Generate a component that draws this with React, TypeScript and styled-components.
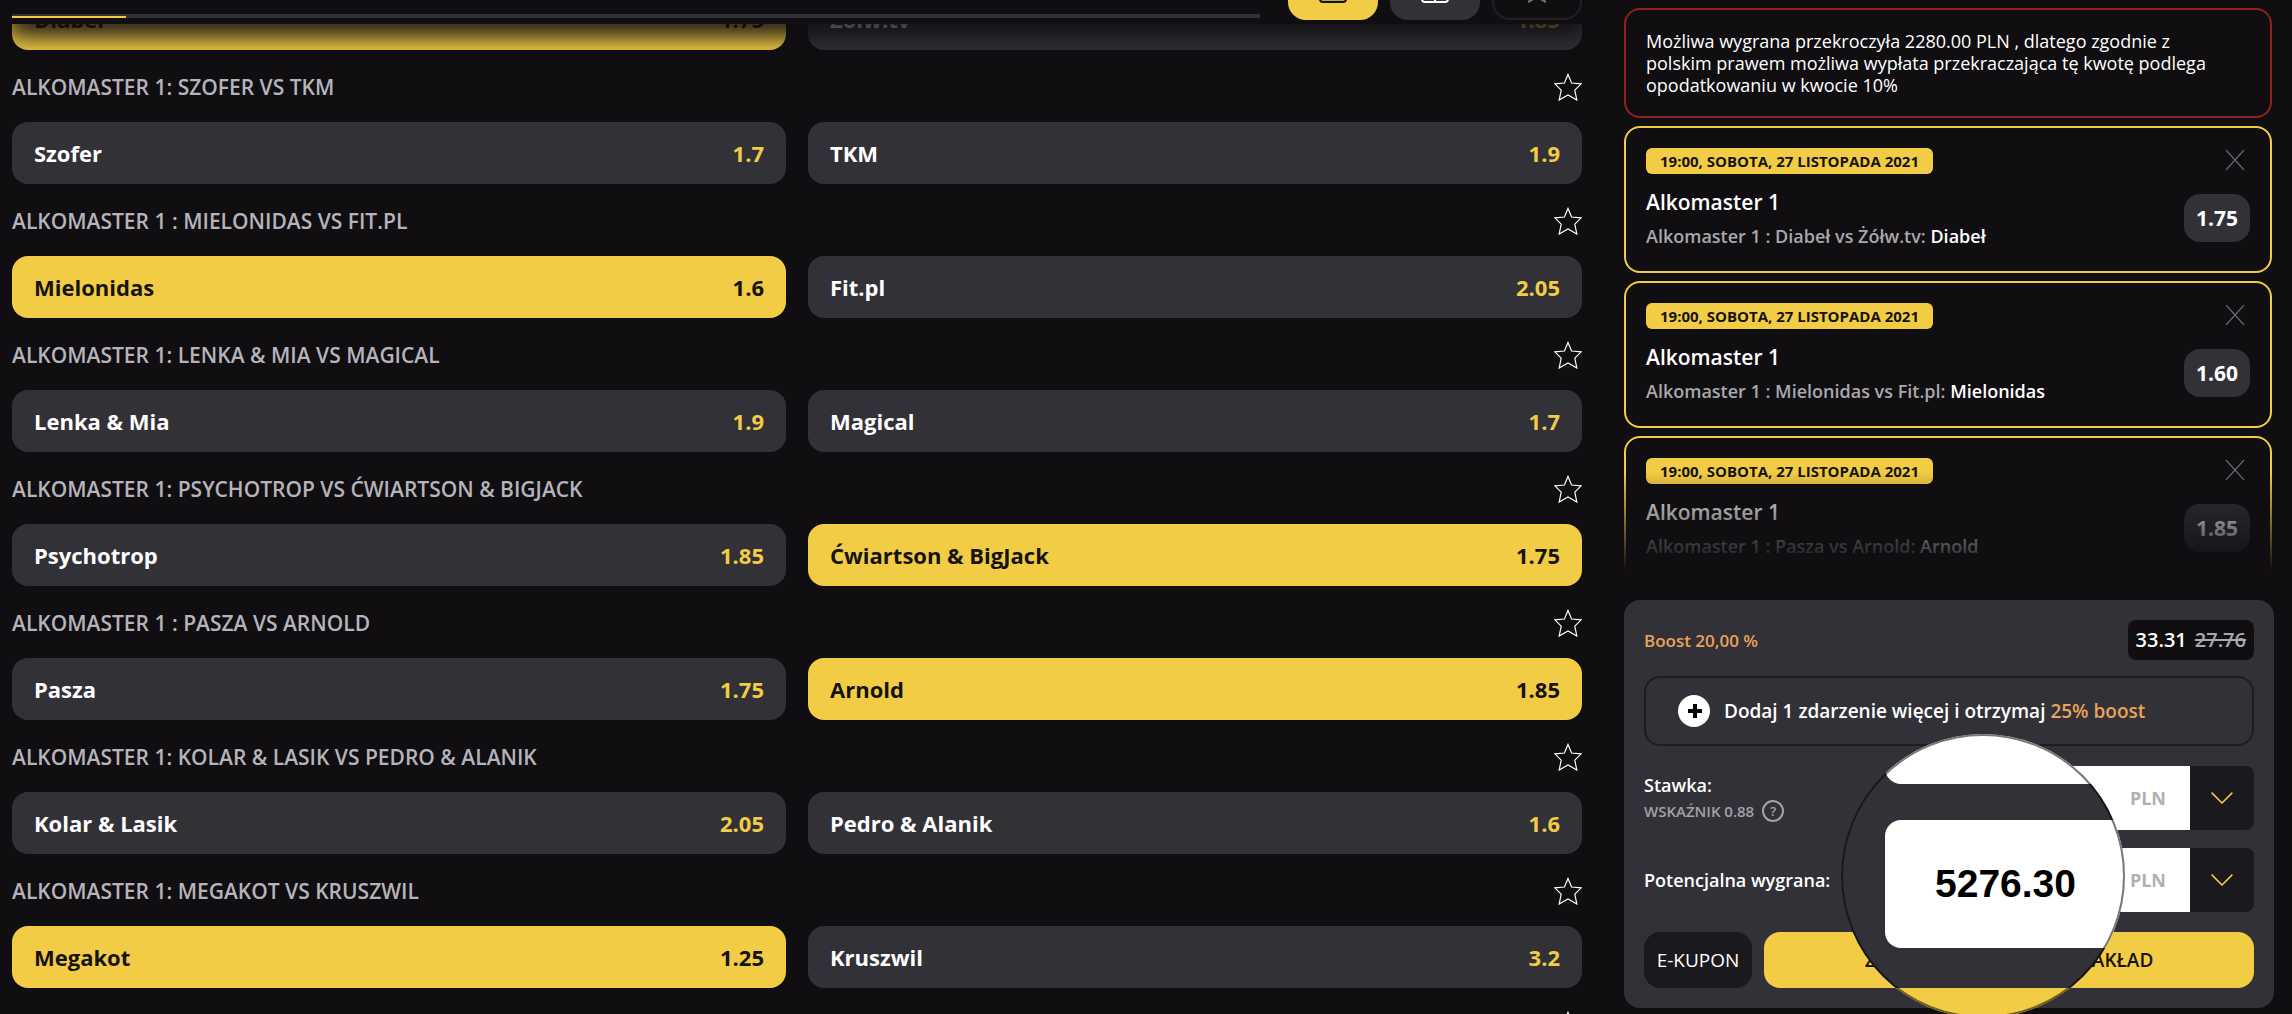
import React from "react";
import styled, { createGlobalStyle, css } from "styled-components";

const color = {
  page: "#100e11",
  card: "#323137",
  ink: "#1a191e",
  line: "#1e1d22",
  yellow: "#f2cc45",
  orange: "#e9a35b",
  red: "#8f231c",
  muted: "#b5b4bb",
  white: "#ffffff",
};

const GlobalStyle = createGlobalStyle`
  * { box-sizing: border-box; }
  body {
    margin: 0;
    background: ${color.page};
    color: ${color.white};
    font-family: "Open Sans", "Noto Sans", sans-serif;
  }
  button, input { font: inherit; color: inherit; }
  button { border: 0; padding: 0; background: none; cursor: pointer; }
  h2, h3, p { margin: 0; font-weight: inherit; font-size: inherit; }
`;

const Page = styled.div`
  display: flex;
  gap: 42px;
  height: 100vh;
  padding: 0 18px 0 12px;
  overflow: hidden;
`;

/* ---------- offer ---------- */

const Offer = styled.main`
  display: flex;
  flex: 1;
  flex-direction: column;
  min-width: 0;
`;

const TopBar = styled.header`
  position: relative;
  z-index: 1;
  display: flex;
  align-items: flex-end;
  gap: 28px;
  flex: none;
  height: 24px;
  background: ${color.page};
  box-shadow: 0 8px 24px 4px ${color.page};
`;

const Tabs = styled.nav`
  display: flex;
  flex: 1;
  margin-bottom: 6px;
  border-bottom: 4px solid ${color.card};
`;

const Tab = styled.button`
  width: 114px;
  height: 16px;
  margin-bottom: -4px;
  border-bottom: 2px solid ${color.yellow};
`;

const ViewSwitch = styled.div`
  display: flex;
  align-items: flex-end;
  gap: 12px;
  padding-bottom: 4px;
`;

const ViewButton = styled.button<{ $tone: "active" | "plain" | "outline" }>`
  display: flex;
  align-items: center;
  justify-content: center;
  width: 90px;
  height: 60px;
  border-radius: 18px;
  ${({ $tone }) =>
    $tone === "active"
      ? css`background: ${color.yellow};`
      : $tone === "plain"
      ? css`background: ${color.card};`
      : css`border: 2px solid #201f24;`}
`;

const EventList = styled.div`
  flex: 1;
  min-height: 0;
  overflow: hidden;
`;

const EventScroll = styled.div`
  margin-top: -108px;
`;

const EventHead = styled.div`
  display: flex;
  align-items: center;
  justify-content: space-between;
  height: 72px;
  padding-top: 2px;
`;

const EventTitle = styled.h3`
  color: ${color.muted};
  font-size: 21px;
  font-weight: 600;
  line-height: 32px;
  text-transform: uppercase;
`;

const IconButton = styled.button`
  display: flex;
`;

const Options = styled.div`
  display: grid;
  grid-template-columns: 1fr 1fr;
  gap: 22px;
`;

const Option = styled.button<{ $picked?: boolean }>`
  display: flex;
  align-items: center;
  justify-content: space-between;
  height: 62px;
  padding: 0 22px;
  border-radius: 16px;
  background: ${({ $picked }) => ($picked ? color.yellow : color.card)};
  color: ${({ $picked }) => ($picked ? "#16130c" : color.white)};
  font-size: 22px;
  font-weight: 700;
  line-height: 32px;
`;

const Odd = styled.span<{ $picked?: boolean }>`
  color: ${({ $picked }) => ($picked ? "inherit" : color.yellow)};
`;

/* ---------- bet slip ---------- */

const Slip = styled.aside`
  display: flex;
  flex-direction: column;
  gap: 28px;
  flex: none;
  width: 650px;
  padding: 8px 0 6px;
`;

const SlipList = styled.div`
  position: relative;
  display: flex;
  flex: 1;
  flex-direction: column;
  gap: 8px;
  min-height: 0;
  padding-right: 2px;
  overflow: hidden;

  &::after {
    position: absolute;
    inset: auto 0 0;
    height: 100px;
    background: linear-gradient(#100e1100, ${color.page});
    content: "";
    pointer-events: none;
  }
`;

const Notice = styled.p`
  flex: none;
  padding: 20px 40px 20px 20px;
  border: 2px solid ${color.red};
  border-radius: 16px;
  font-size: 18px;
  line-height: 22px;
`;

const Bet = styled.article`
  display: flex;
  flex: none;
  justify-content: space-between;
  height: 147px;
  padding: 20px;
  border: 2px solid ${color.yellow};
  border-radius: 16px;
`;

const BetInfo = styled.div`
  display: flex;
  flex-direction: column;
  align-items: flex-start;
`;

const BetDate = styled.time`
  padding: 0 14px;
  border-radius: 6px;
  background: ${color.yellow};
  color: #16130c;
  font-size: 15px;
  font-weight: 700;
  line-height: 26px;
  text-transform: uppercase;
`;

const BetTitle = styled.h3`
  margin-top: 12px;
  font-size: 21px;
  font-weight: 600;
  line-height: 32px;
`;

const BetPick = styled.p`
  margin-top: 4px;
  color: #a9a8ac;
  font-size: 18px;
  font-weight: 600;
  line-height: 28px;

  strong { color: ${color.white}; font-weight: 600; }
`;

const BetSide = styled.div`
  display: flex;
  flex-direction: column;
  align-items: flex-end;
  gap: 24px;
  padding-top: 2px;
`;

const CloseButton = styled(IconButton)`
  padding-right: 5px;
`;

const BetOdd = styled.span`
  width: 66px;
  border-radius: 16px;
  background: ${color.card};
  font-size: 21px;
  font-weight: 700;
  line-height: 48px;
  text-align: center;
`;

const Coupon = styled.section`
  position: relative;
  display: flex;
  flex: none;
  flex-direction: column;
  padding: 20px;
  border-radius: 16px;
  background: ${color.card};
`;

const Line = styled.div`
  display: flex;
  align-items: center;
  justify-content: space-between;
`;

const Boost = styled.span`
  color: ${color.orange};
  font-size: 17px;
  font-weight: 600;
`;

const TotalOdds = styled.span`
  display: flex;
  gap: 8px;
  padding: 0 8px;
  border-radius: 8px;
  background: ${color.page};
  font-size: 20px;
  font-weight: 600;
  line-height: 40px;

  s { color: #a9a8ac; }
`;

const Promo = styled.button`
  display: flex;
  align-items: center;
  gap: 14px;
  height: 70px;
  margin-top: 16px;
  padding: 0 32px;
  border: 2px solid ${color.line};
  border-radius: 16px;
  font-size: 19px;
  font-weight: 600;

  em { color: ${color.orange}; font-style: normal; }
`;

const FieldRow = styled(Line)<{ $gap: number }>`
  margin-top: ${({ $gap }) => $gap}px;
`;

const FieldLabel = styled.label`
  font-size: 18px;
  font-weight: 600;
  line-height: 26px;
`;

const Ratio = styled.div`
  display: flex;
  align-items: center;
  gap: 8px;
  color: #a3a2a8;
  font-size: 15px;
  font-weight: 600;
  line-height: 26px;
`;

const Help = styled.button`
  width: 22px;
  height: 22px;
  border: 2px solid #a3a2a8;
  border-radius: 50%;
  font-size: 13px;
  font-weight: 600;
  line-height: 18px;
`;

const Amount = styled.div`
  display: flex;
  width: 324px;
  height: 64px;
  border-radius: 8px;
  overflow: hidden;
`;

const AmountBox = styled.div`
  display: flex;
  flex: 1;
  align-items: center;
  min-width: 0;
  padding-right: 24px;
  background: ${color.white};
  color: #b1b0b3;
  font-size: 18px;
  font-weight: 700;
`;

const AmountInput = styled.input`
  flex: 1;
  min-width: 0;
  border: 0;
  outline: 0;
  background: none;
  color: #000;
  text-align: center;
`;

const AmountToggle = styled.button`
  display: flex;
  align-items: center;
  justify-content: center;
  width: 64px;
  background: ${color.ink};
`;

const Actions = styled.div`
  display: flex;
  gap: 12px;
  margin-top: 20px;
`;

const Action = styled.button<{ $primary?: boolean }>`
  flex: ${({ $primary }) => ($primary ? "1" : "none")};
  width: 108px;
  height: 56px;
  border-radius: 16px;
  background: ${({ $primary }) => ($primary ? color.yellow : color.ink)};
  color: ${({ $primary }) => ($primary ? "#16130c" : color.white)};
  font-size: 19px;
  font-weight: ${({ $primary }) => ($primary ? 600 : 400)};
`;

/* Round magnifying glass lying over the win amount. */
const Lens = styled.div`
  position: absolute;
  right: 149px;
  bottom: -10px;
  display: flex;
  flex-direction: column;
  width: 284px;
  height: 284px;
  border-radius: 50%;
  background: ${color.card};
  overflow: hidden;

  &::after {
    position: absolute;
    inset: 0;
    border: 2px solid #00000088;
    border-radius: 50%;
    content: "";
  }
`;

const LensStake = styled.div`
  height: 50px;
  margin-left: 44px;
  border-radius: 0 0 0 16px;
  background: ${color.white};
`;

const LensAmount = styled.output`
  margin: 36px 0 40px 44px;
  padding-left: 50px;
  border-radius: 16px 0 0 16px;
  background: ${color.white};
  color: #000;
  font: bold 39px / 128px "Liberation Sans", Arial, sans-serif;
`;

const LensAction = styled.div`
  flex: 1;
  background: ${color.yellow};
`;

/* ---------- icons ---------- */

const StarIcon = ({ size = 28, tint = "#ffffff" }) => (
  <svg width={size} height={size} viewBox="0 0 28 28" fill="none" stroke={tint} strokeWidth="1.2" aria-hidden="true">
    <path d="M14 1.4 17.6 10 27.2 10.8 20.8 17.2 22.8 27 14 22 5.2 27 7.2 17.2.8 10.8 10.4 10Z" />
  </svg>
);

const CloseIcon = () => (
  <svg width="20" height="20" viewBox="0 0 20 20" stroke="#6c6b70" strokeWidth="1.2" aria-hidden="true">
    <path d="M1 0 19 20M19 0 1 20" />
  </svg>
);

const ChevronIcon = () => (
  <svg width="22" height="12" viewBox="0 0 22 12" fill="none" stroke={color.yellow} strokeWidth="1.5" aria-hidden="true">
    <path d="M.6.6 11 11 21.4.6" />
  </svg>
);

const PlusIcon = () => (
  <svg width="32" height="32" viewBox="0 0 32 32" aria-hidden="true">
    <circle cx="16" cy="16" r="16" fill="#fff" />
    <path d="M17 9v14M10 16h14" stroke="#000" strokeWidth="4" />
  </svg>
);

const ListIcon = () => (
  <svg width="28" height="26" viewBox="0 0 28 26" fill="#b8a766" stroke="#16130c" strokeWidth="2" aria-hidden="true">
    <rect x="1" y="1" width="26" height="24" rx="3" />
  </svg>
);

const GridIcon = () => (
  <svg width="28" height="26" viewBox="0 0 28 26" fill="none" stroke="#fff" strokeWidth="2" aria-hidden="true">
    <rect x="1" y="1" width="26" height="24" rx="3" />
    <path d="M14 1v24" />
  </svg>
);

/* ---------- data ---------- */

type Side = { name: string; odd: string; picked?: boolean };
type Match = { title?: string; sides: Side[] };

const matches: Match[] = [
  { sides: [{ name: "Diabeł", odd: "1.75", picked: true }, { name: "Żółw.tv", odd: "1.85" }] },
  { title: "Alkomaster 1: Szofer vs TKM", sides: [{ name: "Szofer", odd: "1.7" }, { name: "TKM", odd: "1.9" }] },
  { title: "Alkomaster 1 : Mielonidas vs Fit.pl", sides: [{ name: "Mielonidas", odd: "1.6", picked: true }, { name: "Fit.pl", odd: "2.05" }] },
  { title: "Alkomaster 1: Lenka & Mia vs Magical", sides: [{ name: "Lenka & Mia", odd: "1.9" }, { name: "Magical", odd: "1.7" }] },
  { title: "Alkomaster 1: Psychotrop vs Ćwiartson & BigJack", sides: [{ name: "Psychotrop", odd: "1.85" }, { name: "Ćwiartson & BigJack", odd: "1.75", picked: true }] },
  { title: "Alkomaster 1 : Pasza vs Arnold", sides: [{ name: "Pasza", odd: "1.75" }, { name: "Arnold", odd: "1.85", picked: true }] },
  { title: "Alkomaster 1: Kolar & Lasik vs Pedro & Alanik", sides: [{ name: "Kolar & Lasik", odd: "2.05" }, { name: "Pedro & Alanik", odd: "1.6" }] },
  { title: "Alkomaster 1: Megakot vs Kruszwil", sides: [{ name: "Megakot", odd: "1.25", picked: true }, { name: "Kruszwil", odd: "3.2" }] },
  { sides: [] },
];

const bets = [
  { match: "Alkomaster 1 : Diabeł vs Żółw.tv:", pick: "Diabeł", odd: "1.75" },
  { match: "Alkomaster 1 : Mielonidas vs Fit.pl:", pick: "Mielonidas", odd: "1.60" },
  { match: "Alkomaster 1 : Pasza vs Arnold:", pick: "Arnold", odd: "1.85" },
];

function AmountField({ id, toggleLabel }: { id: string; toggleLabel: string }) {
  return (
    <Amount>
      <AmountBox>
        <AmountInput id={id} inputMode="decimal" />
        PLN
      </AmountBox>
      <AmountToggle aria-label={toggleLabel}>
        <ChevronIcon />
      </AmountToggle>
    </Amount>
  );
}

export default function App() {
  return (
    <>
      <GlobalStyle />
      <Page>
        <Offer>
          <TopBar>
            <Tabs>
              <Tab aria-label="Wszystkie" />
            </Tabs>
            <ViewSwitch>
              <ViewButton $tone="active" aria-label="Lista"><ListIcon /></ViewButton>
              <ViewButton $tone="plain" aria-label="Siatka"><GridIcon /></ViewButton>
              <ViewButton $tone="outline" aria-label="Ulubione"><StarIcon size={26} tint="#8a898e" /></ViewButton>
            </ViewSwitch>
          </TopBar>
          <EventList>
            <EventScroll>
              {matches.map((match, index) => (
                <section key={index}>
                  <EventHead>
                    <EventTitle>{match.title}</EventTitle>
                    <IconButton aria-label="Dodaj do ulubionych"><StarIcon /></IconButton>
                  </EventHead>
                  <Options>
                    {match.sides.map((side) => (
                      <Option key={side.name} $picked={side.picked}>
                        {side.name}
                        <Odd $picked={side.picked}>{side.odd}</Odd>
                      </Option>
                    ))}
                  </Options>
                </section>
              ))}
            </EventScroll>
          </EventList>
        </Offer>

        <Slip>
          <SlipList>
            <Notice>
              Możliwa wygrana przekroczyła 2280.00 PLN , dlatego zgodnie z polskim prawem możliwa wypłata
              przekraczająca tę kwotę podlega opodatkowaniu w kwocie 10%
            </Notice>
            {bets.map((bet) => (
              <Bet key={bet.pick}>
                <BetInfo>
                  <BetDate dateTime="2021-11-27T19:00">19:00, Sobota, 27 listopada 2021</BetDate>
                  <BetTitle>Alkomaster 1</BetTitle>
                  <BetPick>{bet.match} <strong>{bet.pick}</strong></BetPick>
                </BetInfo>
                <BetSide>
                  <CloseButton aria-label="Usuń"><CloseIcon /></CloseButton>
                  <BetOdd>{bet.odd}</BetOdd>
                </BetSide>
              </Bet>
            ))}
          </SlipList>

          <Coupon>
            <Line>
              <Boost>Boost 20,00 %</Boost>
              <TotalOdds>33.31 <s>27.76</s></TotalOdds>
            </Line>
            <Promo>
              <PlusIcon />
              <span>Dodaj 1 zdarzenie więcej i otrzymaj <em>25% boost</em></span>
            </Promo>
            <FieldRow $gap={20}>
              <div>
                <FieldLabel htmlFor="stake">Stawka:</FieldLabel>
                <Ratio>WSKAŹNIK 0.88 <Help aria-label="Co to jest wskaźnik">?</Help></Ratio>
              </div>
              <AmountField id="stake" toggleLabel="Wybierz stawkę" />
            </FieldRow>
            <FieldRow $gap={18}>
              <FieldLabel htmlFor="win">Potencjalna wygrana:</FieldLabel>
              <AmountField id="win" toggleLabel="Wybierz wygraną" />
            </FieldRow>
            <Actions>
              <Action>E-KUPON</Action>
              <Action $primary>ZALOGUJ SIĘ I ZAWRZYJ ZAKŁAD</Action>
            </Actions>
            <Lens>
              <LensStake />
              <LensAmount htmlFor="win">5276.30</LensAmount>
              <LensAction />
            </Lens>
          </Coupon>
        </Slip>
      </Page>
    </>
  );
}
